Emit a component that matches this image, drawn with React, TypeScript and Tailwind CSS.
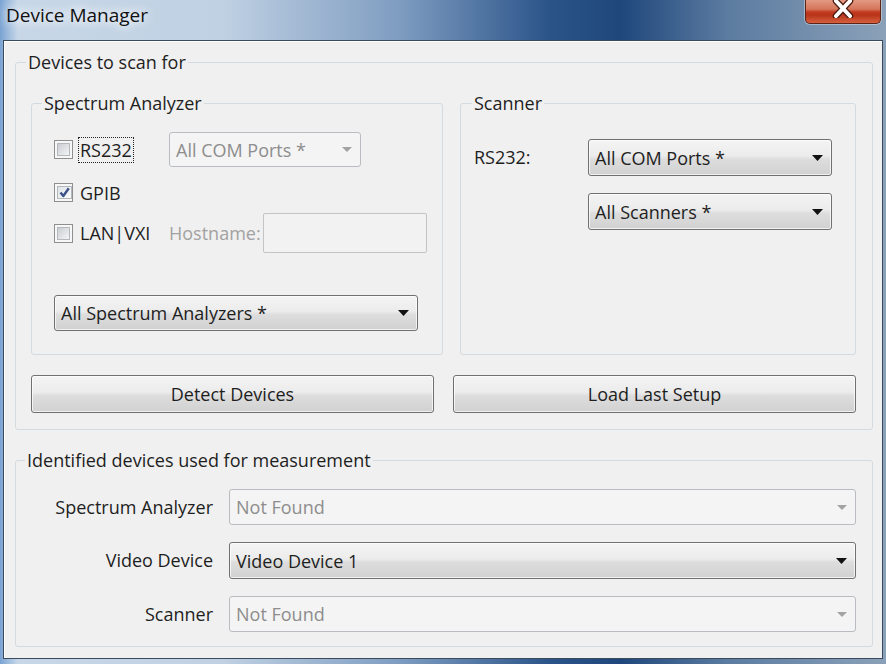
import type { ReactNode } from "react";

const btnBg =
  "bg-[linear-gradient(to_bottom,#f4f4f4_0%,#ececec_45%,#dddddd_55%,#d1d1d1_100%)]";

function Arrow({ disabled }: { disabled?: boolean }) {
  return disabled ? (
    <svg width="10" height="5" viewBox="0 0 10 5" className="shrink-0">
      <path d="M0 0h10L5 5z" fill="#a3a3a3" />
    </svg>
  ) : (
    <svg width="11" height="6" viewBox="0 0 11 6" className="shrink-0">
      <path d="M0 0h11L5.5 6z" fill="#111" />
    </svg>
  );
}

function Combo({
  text,
  disabled,
  className,
}: {
  text: string;
  disabled?: boolean;
  className: string;
}) {
  if (disabled) {
    return (
      <div
        className={`flex items-center justify-between pl-[6px] pr-[8px] rounded-[3px] border border-[#b9bdc1] bg-[#f4f4f4] text-[#8d8d8d] ${className}`}
      >
        <span className="leading-none">{text}</span>
        <Arrow disabled />
      </div>
    );
  }
  return (
    <div
      className={`flex items-center justify-between pl-[6px] pr-[8px] rounded-[3px] border border-[#707070] shadow-[inset_0_0_0_1px_rgba(255,255,255,0.7)] ${btnBg} ${className}`}
    >
      <span className="leading-none">{text}</span>
      <Arrow />
    </div>
  );
}

function Check({ checked }: { checked?: boolean }) {
  return (
    <span className="flex w-[19px] h-[19px] shrink-0 border border-[#8f8f8f] bg-[#f7f7f7] p-[2px]">
      <span
        className={`flex flex-1 items-center justify-center border border-[#b3b8bd] ${
          checked
            ? "bg-[linear-gradient(135deg,#dfe3e8,#fbfbfb)]"
            : "bg-[linear-gradient(135deg,#c9cdd3,#f5f5f5)]"
        }`}
      >
        {checked && (
          <svg width="13" height="13" viewBox="0 0 13 13">
            <path
              d="M2.5 6.5L5.3 10L10.8 2.2"
              fill="none"
              stroke="#3d5289"
              strokeWidth="2.4"
              strokeLinejoin="round"
            />
          </svg>
        )}
      </span>
    </span>
  );
}

function Group({
  title,
  className,
  legendClass,
  children,
}: {
  title: string;
  className: string;
  legendClass: string;
  children: ReactNode;
}) {
  return (
    <fieldset className={`border border-[#d3dbe0] rounded-[3px] ${className}`}>
      <legend className={`px-[2px] leading-[24px] ${legendClass}`}>{title}</legend>
      {children}
    </fieldset>
  );
}

export default function App() {
  return (
    <div className="w-[886px] h-[664px] overflow-hidden flex flex-col bg-[linear-gradient(to_right,#7aa3d3_0%,#c7d7e8_2%,#c0d1e3_25%,#7f9dc1_45%,#2b5489_62%,#1f477c_70%,#5b7ba0_82%,#8ba1b9_100%)] font-['Open_Sans',sans-serif] text-[18px] text-[#1e1e1e]">
      {/* title bar */}
      <div className="h-[40px] flex justify-between items-start shrink-0">
        <div className="pl-[6px] pt-[3px] text-[19px] leading-[24px] text-[#111] [text-shadow:0_0_8px_#fff,0_0_14px_#fff]">
          Device Manager
        </div>
        <div className="mr-[5px] w-[76px] h-[24px] rounded-b-[5px] border border-t-0 border-[#5e2417] shadow-[0_0_0_1px_rgba(255,255,255,0.35)] bg-[linear-gradient(to_bottom,#e39a84_0%,#d5755b_40%,#c23b20_52%,#b8331a_65%,#d6613f_100%)] flex justify-center items-start">
          <svg width="22" height="18" viewBox="0 0 22 18" className="mt-[0px]">
            <path
              d="M4 1L18 16M18 1L4 16"
              stroke="#4a1a10"
              strokeWidth="6.5"
              strokeLinecap="round"
            />
            <path
              d="M4 1L18 16M18 1L4 16"
              stroke="#ffffff"
              strokeWidth="4"
              strokeLinecap="round"
            />
          </svg>
        </div>
      </div>

      {/* client area */}
      <div className="ml-[3px] w-[880px] h-[619px] border border-[#3b4b5e] bg-[#f0f0f0] shadow-[inset_1px_1px_0_#fff]">
        <Group
          title="Devices to scan for"
          className="ml-[11px] mt-[9px] w-[858px] pb-[16px] pl-[15px] pr-[16px]"
          legendClass="ml-[-5px]"
        >
          <div className="flex gap-[17px] mt-[17px]">
            <Group
              title="Spectrum Analyzer"
              className="w-[412px] h-[264px] pl-[22px]"
              legendClass="ml-[-12px]"
            >
              <div className="flex items-center h-[35px] mt-[17px]">
                <div className="w-[115px] flex items-center gap-[5px]">
                  <Check />
                  <span className="border border-dotted border-[#222] px-[1px] leading-[24px]">
                    RS232
                  </span>
                </div>
                <Combo text="All COM Ports *" disabled className="w-[192px] h-[35px]" />
              </div>
              <div className="flex items-center h-[35px] mt-[8px]">
                <div className="w-[115px] flex items-center gap-[5px]">
                  <Check checked />
                  <span className="border border-transparent px-[1px] leading-[24px]">GPIB</span>
                </div>
              </div>
              <div className="flex items-center h-[40px] mt-[3px]">
                <div className="w-[115px] flex items-center gap-[5px]">
                  <Check />
                  <span className="border border-transparent px-[1px] leading-[24px]">
                    LAN|VXI
                  </span>
                </div>
                <span className="w-[94px] text-[#a2a2a2]">Hostname:</span>
                <div className="w-[164px] h-[40px] rounded-[2px] border border-[#c4c4c4] bg-[#f2f2f2]" />
              </div>
              <Combo text="All Spectrum Analyzers *" className="mt-[42px] w-[364px] h-[36px]" />
            </Group>

            <Group
              title="Scanner"
              className="w-[396px] h-[264px] pl-[13px]"
              legendClass="ml-[-2px]"
            >
              <div className="flex items-center mt-[24px]">
                <span className="w-[114px]">RS232:</span>
                <Combo text="All COM Ports *" className="w-[244px] h-[37px]" />
              </div>
              <div className="flex items-center mt-[17px]">
                <span className="w-[114px]" />
                <Combo text="All Scanners *" className="w-[244px] h-[37px]" />
              </div>
            </Group>
          </div>

          <div className="flex gap-[19px] mt-[20px]">
            <button
              type="button"
              className={`w-[403px] h-[38px] rounded-[3px] border border-[#707070] shadow-[inset_0_0_0_1px_rgba(255,255,255,0.7)] ${btnBg}`}
            >
              Detect Devices
            </button>
            <button
              type="button"
              className={`w-[403px] h-[38px] rounded-[3px] border border-[#707070] shadow-[inset_0_0_0_1px_rgba(255,255,255,0.7)] ${btnBg}`}
            >
              Load Last Setup
            </button>
          </div>
        </Group>

        <Group
          title="Identified devices used for measurement"
          className="ml-[11px] mt-[18px] w-[858px] pb-[14px] pl-[0px] pr-[15px]"
          legendClass="ml-[9px]"
        >
          {[
            { label: "Spectrum Analyzer", text: "Not Found", disabled: true, h: "h-[36px]" },
            { label: "Video Device", text: "Video Device 1", disabled: false, h: "h-[37px]" },
            { label: "Scanner", text: "Not Found", disabled: true, h: "h-[36px]" },
          ].map((r) => (
            <div key={r.label} className="flex items-center gap-[16px] mt-[17px]">
              <span className="w-[197px] text-right">{r.label}</span>
              <Combo text={r.text} disabled={r.disabled} className={`w-[627px] ${r.h}`} />
            </div>
          ))}
        </Group>
      </div>
    </div>
  );
}
